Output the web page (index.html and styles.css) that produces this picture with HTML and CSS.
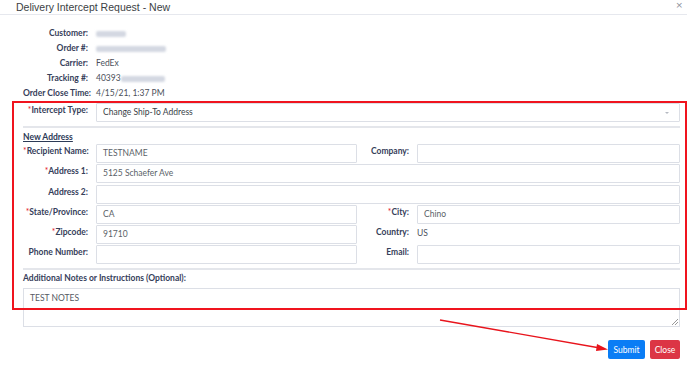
FILE: index.html
```html
<!DOCTYPE html>
<html lang="en">
<head>
    <meta charset="UTF-8">
    <meta name="viewport" content="width=device-width, initial-scale=1.0">
    <title>Delivery Intercept Request</title>
    <link rel="stylesheet" href="styles.css">
</head>
<body>
    <div class="modal">
        <div class="modal-header">
            <span class="modal-title">Delivery Intercept Request - New</span>
            <span class="close-x">&times;</span>
        </div>

        <div class="modal-body">
            <div class="info">
                <div class="info-label">Customer:</div>
                <div class="info-value"><span class="blur" style="width: 30px"></span></div>
                <div class="info-label">Order #:</div>
                <div class="info-value"><span class="blur" style="width: 70px"></span></div>
                <div class="info-label">Carrier:</div>
                <div class="info-value">FedEx</div>
                <div class="info-label">Tracking #:</div>
                <div class="info-value">40393<span class="blur" style="width: 44px"></span></div>
                <div class="info-label">Order Close Time:</div>
                <div class="info-value">4/15/21, 1:37 PM</div>
            </div>

            <div class="form">
                <div class="form-grid">
                    <label class="lbl"><span class="req">*</span>Intercept Type:</label>
                    <div class="field select wide">Change Ship-To Address<span class="caret"></span></div>
                </div>

                <hr class="divider">

                <div class="section-title">New Address</div>

                <div class="form-grid">
                    <label class="lbl"><span class="req">*</span>Recipient Name:</label>
                    <div class="field">TESTNAME</div>
                    <label class="lbl">Company:</label>
                    <div class="field"></div>

                    <label class="lbl"><span class="req">*</span>Address 1:</label>
                    <div class="field wide">5125 Schaefer Ave</div>

                    <label class="lbl">Address 2:</label>
                    <div class="field wide"></div>

                    <label class="lbl"><span class="req">*</span>State/Province:</label>
                    <div class="field">CA</div>
                    <label class="lbl"><span class="req">*</span>City:</label>
                    <div class="field">Chino</div>

                    <label class="lbl"><span class="req">*</span>Zipcode:</label>
                    <div class="field">91710</div>
                    <label class="lbl">Country:</label>
                    <div class="plain">US</div>

                    <label class="lbl">Phone Number:</label>
                    <div class="field"></div>
                    <label class="lbl">Email:</label>
                    <div class="field"></div>
                </div>

                <hr class="divider">

                <div class="notes-label">Additional Notes or Instructions (Optional):</div>
                <div class="textarea">TEST NOTES<span class="grip"></span></div>
            </div>

            <div class="footer">
                <button class="btn btn-primary">Submit</button>
                <button class="btn btn-danger">Close</button>
            </div>
        </div>
    </div>

    <!-- annotation overlay -->
    <div class="highlight"></div>
    <svg class="arrow" width="700" height="366" viewBox="0 0 700 366">
        <line x1="440" y1="320" x2="600" y2="348" stroke="#e8141c" stroke-width="1.3"/>
        <polygon points="608,349.5 597,344 596,351" fill="#e8141c"/>
    </svg>
</body>
</html>
```

FILE: styles.css
```css
body {
    margin: 0;
    font-family: Lato, "Open Sans", sans-serif;
    font-size: 8.5px;
    color: #36405a;
    background: #fff;
    overflow: hidden;
}

.modal {
    width: 687px;
    background: #fff;
}

.modal-header {
    height: 14px;
    display: flex;
    align-items: center;
    justify-content: space-between;
    padding: 0 4px 0 16px;
    border-bottom: 1px solid #e6e8ee;
}

.modal-title {
    font-family: "Liberation Sans", Arial, sans-serif;
    font-size: 10.5px;
    color: #3c3f44;
}

.close-x {
    font-family: "DejaVu Sans", sans-serif;
    font-size: 9px;
    color: #8a8f99;
    margin-top: -4px;
}

.modal-body {
    padding: 11px 0 0 23px;
    width: 657px;
}

.info {
    display: grid;
    grid-template-columns: 65px 1fr;
    column-gap: 8px;
    line-height: 15px;
}

.info-label {
    text-align: right;
    font-weight: 700;
    white-space: nowrap;
}

.info-value {
    color: #4b505a;
}

.blur {
    display: inline-block;
    height: 6px;
    vertical-align: middle;
    background: #d4d8e2;
    border-radius: 2px;
    filter: blur(1px);
}

.form {
    margin-top: 2px;
}

.form-grid {
    display: grid;
    grid-template-columns: 73px 261px 60px 263px;
    row-gap: 1.3px;
}

.lbl {
    text-align: right;
    font-weight: 700;
    padding: 2px 8px 0 0;
    white-space: nowrap;
}

.req {
    color: #e4212b;
    font-weight: 400;
}

.field {
    height: 17px;
    border: 1px solid #dcdfe6;
    border-radius: 1px;
    padding: 0 6px;
    line-height: 17px;
    color: #5a5f68;
}

.wide {
    grid-column: 2 / 5;
}

.select {
    position: relative;
    color: #3a3f48;
}

.caret {
    position: absolute;
    right: 10px;
    top: 8px;
    border-left: 2px solid transparent;
    border-right: 2px solid transparent;
    border-top: 2px solid #b6bac2;
}

.plain {
    line-height: 17px;
    color: #4b505a;
}

.divider {
    border: 0;
    border-top: 2px solid #e4e6eb;
    margin: 4px 0 0;
}

.section-title {
    font-weight: 700;
    text-decoration: underline;
    color: #2c3a56;
    line-height: 12px;
    margin: 3px 0 1px;
}

.notes-label {
    font-weight: 700;
    line-height: 12px;
    margin: 2px 0 4px;
}

.textarea {
    position: relative;
    height: 39px;
    border: 1px solid #dcdfe6;
    padding: 4px 6px;
    box-sizing: border-box;
    color: #555a63;
}

.grip {
    position: absolute;
    right: 1px;
    bottom: 1px;
    width: 6px;
    height: 6px;
    background: linear-gradient(135deg, transparent 45%, #999 45%, #999 55%, transparent 55%, transparent 70%, #999 70%, #999 80%, transparent 80%);
}

.footer {
    display: flex;
    justify-content: flex-end;
    gap: 5px;
    margin-top: 13px;
}

.btn {
    height: 19px;
    border: none;
    border-radius: 2px;
    color: #fff;
    font-family: Lato, "Open Sans", sans-serif;
    font-size: 8.5px;
    padding: 0;
    cursor: pointer;
}

.btn-primary {
    background-color: #0a7df5;
    width: 37px;
}

.btn-danger {
    background-color: #dc3545;
    width: 30px;
}

.highlight {
    position: absolute;
    left: 12px;
    top: 101px;
    width: 671px;
    height: 205px;
    border: 2px solid #f0141e;
    pointer-events: none;
}

.arrow {
    position: absolute;
    left: 0;
    top: 0;
    pointer-events: none;
}
```
